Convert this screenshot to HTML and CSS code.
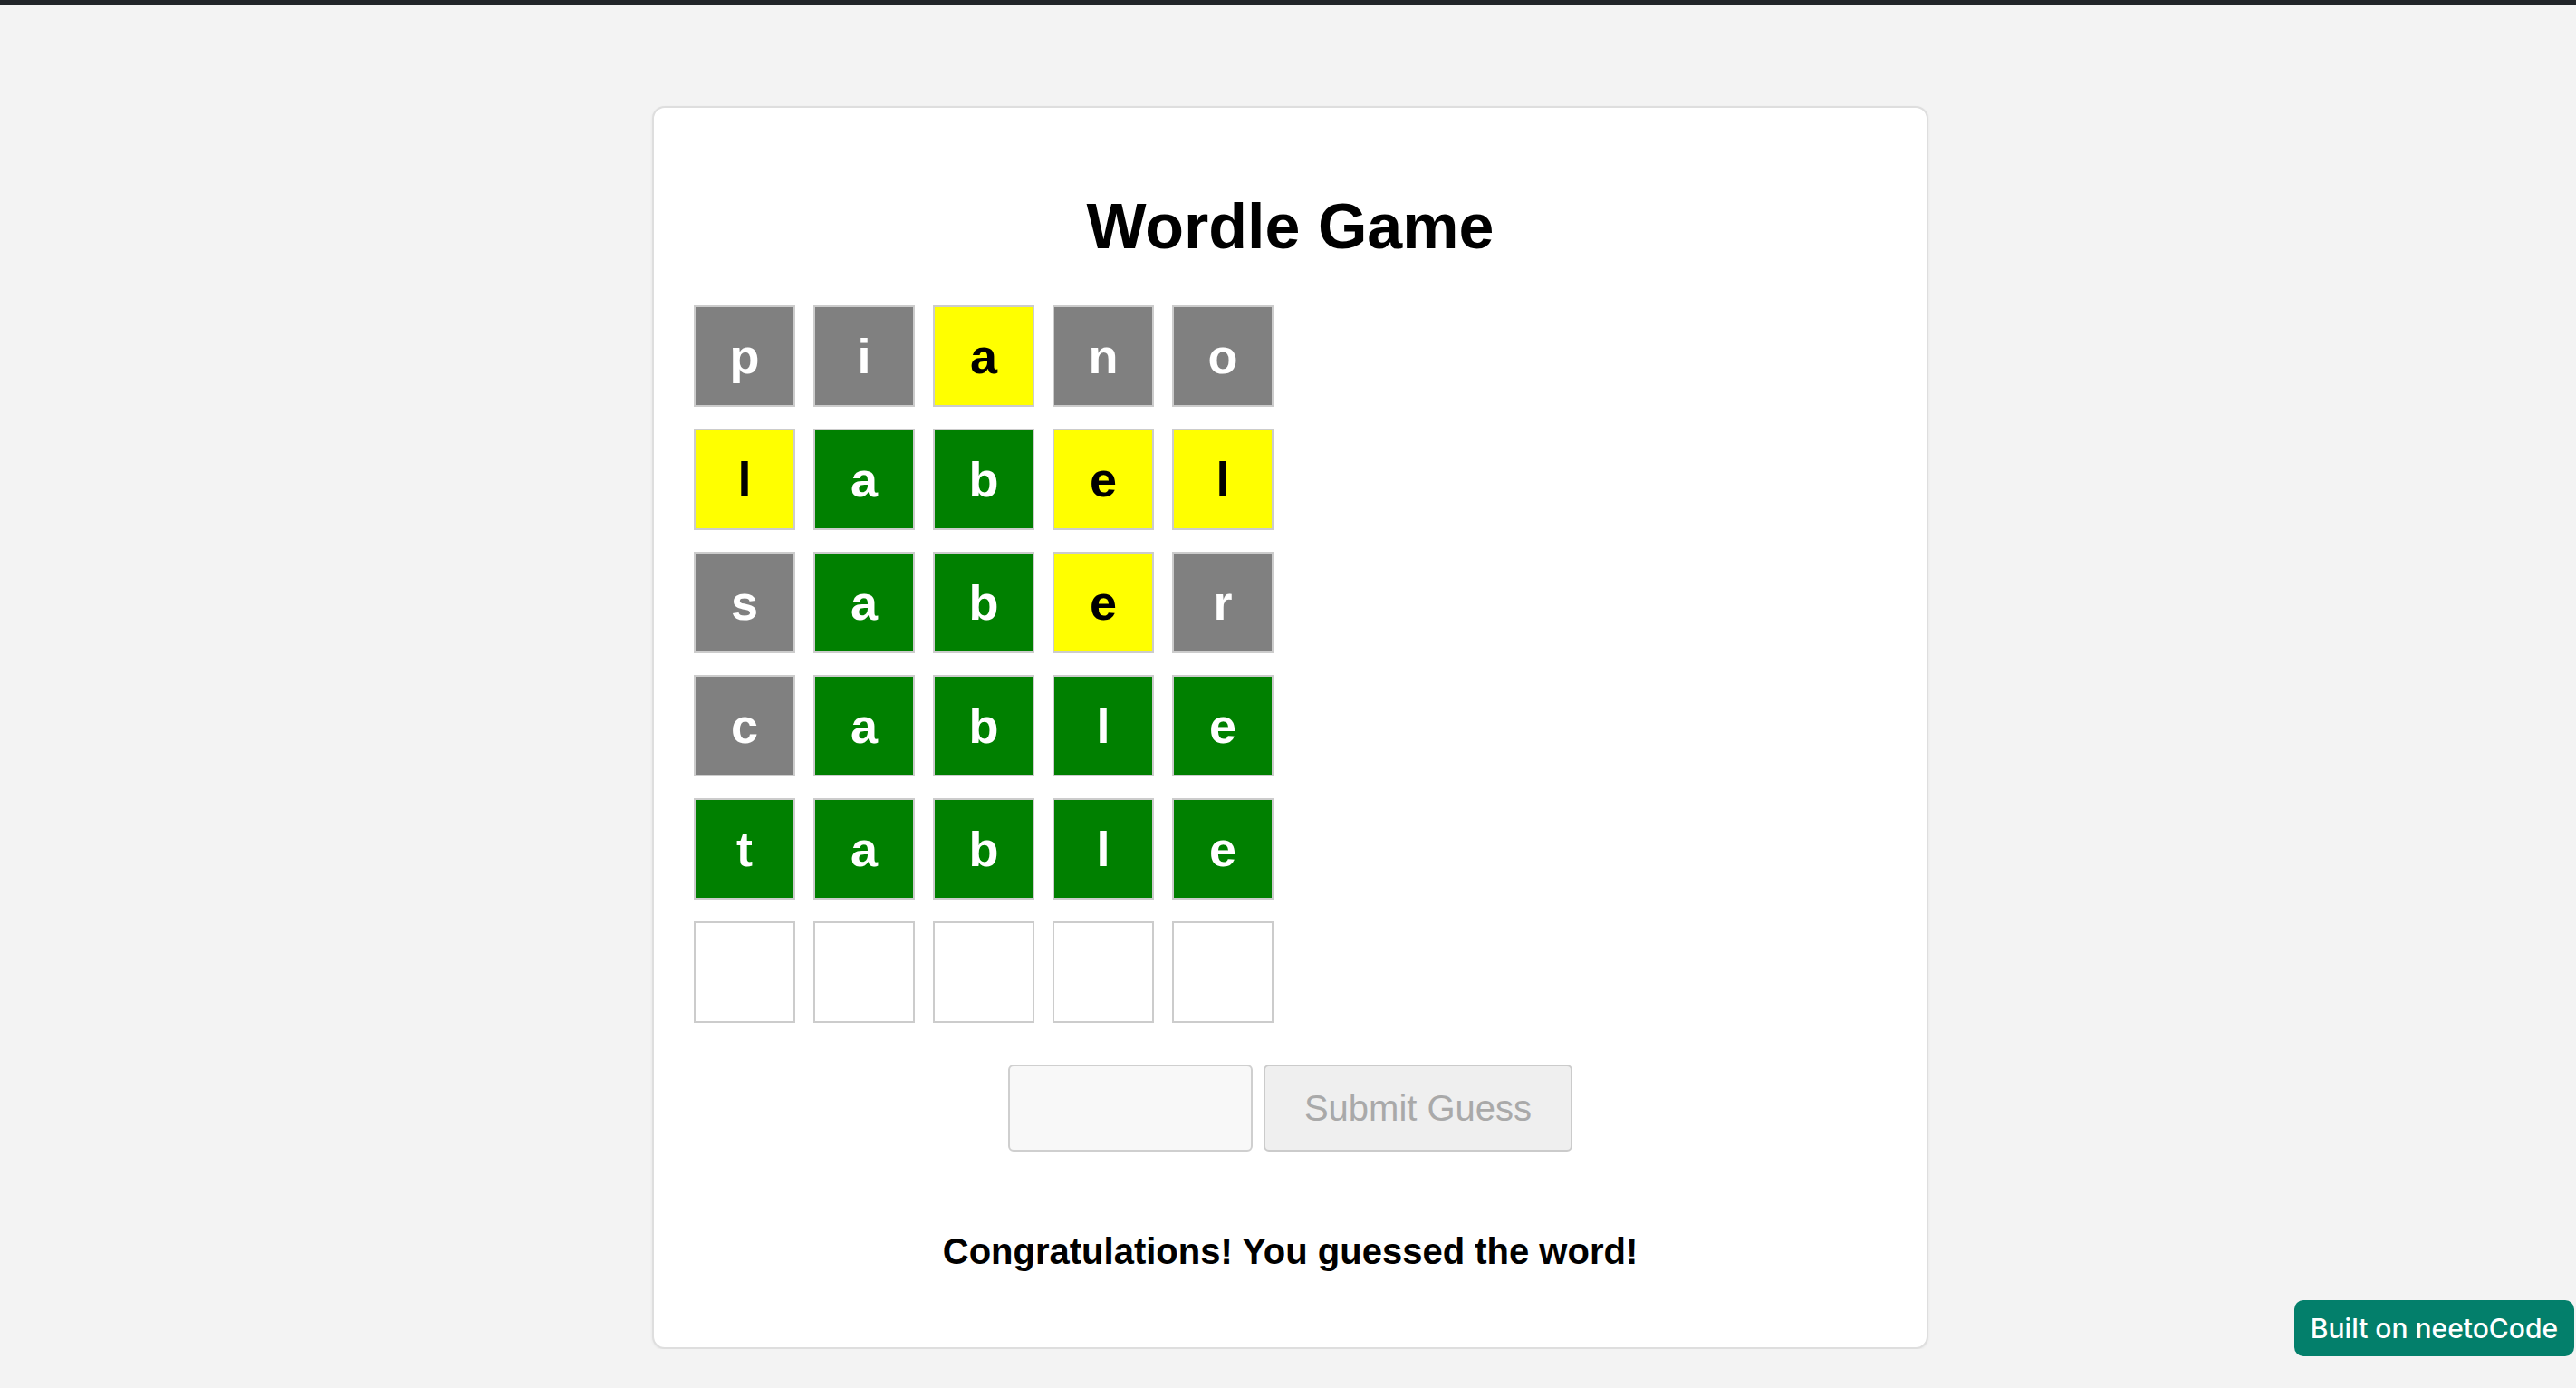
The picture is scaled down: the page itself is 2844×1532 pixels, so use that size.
FILE: index.html
```html
<!DOCTYPE html>
<html lang="en">
<head>
<meta charset="utf-8">
<title>Wordle Game</title>
<link rel="stylesheet" href="styles.css">
</head>
<body>
<div class="topbar"></div>
<main class="card">
  <h1 class="title">Wordle Game</h1>
  <div class="board">
    <div class="tile gray">p</div><div class="tile gray">i</div><div class="tile yellow">a</div><div class="tile gray">n</div><div class="tile gray">o</div>
    <div class="tile yellow">l</div><div class="tile green">a</div><div class="tile green">b</div><div class="tile yellow">e</div><div class="tile yellow">l</div>
    <div class="tile gray">s</div><div class="tile green">a</div><div class="tile green">b</div><div class="tile yellow">e</div><div class="tile gray">r</div>
    <div class="tile gray">c</div><div class="tile green">a</div><div class="tile green">b</div><div class="tile green">l</div><div class="tile green">e</div>
    <div class="tile green">t</div><div class="tile green">a</div><div class="tile green">b</div><div class="tile green">l</div><div class="tile green">e</div>
    <div class="tile"></div><div class="tile"></div><div class="tile"></div><div class="tile"></div><div class="tile"></div>
  </div>
  <div class="form">
    <input class="guess" type="text" disabled>
    <button class="submit" disabled>Submit Guess</button>
  </div>
  <p class="message">Congratulations! You guessed the word!</p>
</main>
<a class="badge" href="#">Built on neetoCode</a>
</body>
</html>
```
FILE: styles.css
```css
html, body {
  margin: 0;
  padding: 0;
}
body {
  background: #f3f3f3;
  font-family: "Liberation Sans", Arial, sans-serif;
  padding-left: 5px;
}
.topbar {
  height: 6px;
  margin-left: -5px;
  background: #212529;
}
.card {
  box-sizing: border-box;
  width: 1409px;
  margin: 111px auto 0;
  background: #fff;
  border: 2px solid #dedede;
  border-radius: 14px;
  padding: 91px 44px 83px;
  box-shadow: 0 1px 3px rgba(0,0,0,0.06);
}
.title {
  margin: 0;
  font-size: 70px;
  line-height: 80px;
  font-weight: bold;
  text-align: center;
  color: #000;
}
.board {
  margin-top: 47px;
  display: grid;
  grid-template-columns: repeat(5, 112px);
  grid-auto-rows: 112px;
  column-gap: 20px;
  row-gap: 24px;
}
.tile {
  box-sizing: border-box;
  border: 2px solid #cccccc;
  background: #fff;
  display: flex;
  align-items: center;
  justify-content: center;
  font-size: 54px;
  font-weight: bold;
  line-height: 1;
  color: #fff;
}
.tile.gray { background: #808080; }
.tile.green { background: #008000; }
.tile.yellow { background: #ffff00; color: #000; }
.form {
  margin-top: 46px;
  display: flex;
  justify-content: center;
  gap: 12px;
}
.guess {
  box-sizing: border-box;
  width: 270px;
  height: 96px;
  margin: 0;
  border: 2px solid #cfcfcf;
  border-radius: 6px;
  background: #f8f8f8;
}
.submit {
  box-sizing: border-box;
  width: 341px;
  height: 96px;
  margin: 0;
  border: 2px solid #cbcbcb;
  border-radius: 6px;
  background: #efefef;
  color: #a9a9a9;
  font-family: "Liberation Sans", Arial, sans-serif;
  font-size: 40px;
}
.message {
  margin: 88px 0 0;
  text-align: center;
  font-size: 40px;
  line-height: 45px;
  font-weight: bold;
  color: #000;
}
.badge {
  position: fixed;
  right: 2px;
  bottom: 35px;
  box-sizing: border-box;
  width: 309px;
  height: 62px;
  display: flex;
  align-items: center;
  justify-content: center;
  background: #037f6b;
  color: #fff;
  border-radius: 10px;
  font-family: Inter, "Noto Sans", sans-serif;
  font-weight: 500;
  font-size: 30px;
  text-decoration: none;
}
```
